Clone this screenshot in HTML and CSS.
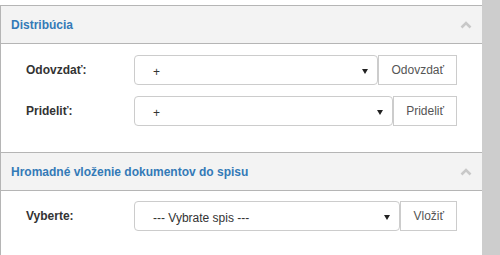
FILE: index.html
```html
<!DOCTYPE html>
<html lang="sk">
<head>
    <meta charset="UTF-8">
    <title>Distribúcia</title>
    <link rel="stylesheet" href="styles.css">
</head>
<body>
    <div class="page">
        <div class="main">
            <div class="panel">
                <div class="panel-heading">
                    <span class="panel-title">Distribúcia</span>
                    <svg class="chevron" width="12" height="8" viewBox="0 0 12 8"><path d="M1.5 6.5 L6 2 L10.5 6.5" fill="none" stroke="#c8c8c8" stroke-width="2.6"/></svg>
                </div>
                <div class="panel-body">
                    <div class="form-row">
                        <label>Odovzdať:</label>
                        <div class="input-group">
                            <div class="select"><span>+</span><span class="caret"></span></div>
                            <button class="btn">Odovzdať</button>
                        </div>
                    </div>
                    <div class="form-row">
                        <label>Prideliť:</label>
                        <div class="input-group">
                            <div class="select"><span>+</span><span class="caret"></span></div>
                            <button class="btn">Prideliť</button>
                        </div>
                    </div>
                </div>

                <div class="panel-heading">
                    <span class="panel-title">Hromadné vloženie dokumentov do spisu</span>
                    <svg class="chevron" width="12" height="8" viewBox="0 0 12 8"><path d="M1.5 6.5 L6 2 L10.5 6.5" fill="none" stroke="#c8c8c8" stroke-width="2.6"/></svg>
                </div>
                <div class="panel-body second">
                    <div class="form-row">
                        <label>Vyberte:</label>
                        <div class="input-group">
                            <div class="select"><span>--- Vybrate spis ---</span><span class="caret"></span></div>
                            <button class="btn">Vložiť</button>
                        </div>
                    </div>
                </div>
            </div>
        </div>
        <div class="scrollbar"></div>
    </div>
</body>
</html>
```

FILE: styles.css
```css
body {
    margin: 0;
    font: 12px "Liberation Sans", Arial, sans-serif;
    color: #333;
}

.page {
    display: flex;
    height: 100vh;
}
.main {
    width: 482px;
    padding-top: 5px;
    box-sizing: border-box;
}
.scrollbar {
    flex: 1;
    background: #cdcdcd;
}

.panel {
    border-left: 1px solid #b5b5b5;
    height: 100%;
}
.panel-heading {
    display: flex;
    align-items: center;
    justify-content: space-between;
    height: 37px;
    padding: 0 10px;
    background: #f3f3f3;
    border-top: 1px solid #b5b5b5;
    border-bottom: 1px solid #b5b5b5;
}
.panel-title {
    color: #337ab7;
    font-weight: bold;
}

.panel-body {
    display: flex;
    flex-direction: column;
    gap: 11px;
    padding: 11px 24px 26px 25px;
}
.panel-body.second {
    padding-top: 10px;
}

.form-row {
    display: flex;
    align-items: center;
}
.form-row label {
    width: 108px;
    font-weight: bold;
    color: #333;
}

.input-group {
    display: flex;
    width: 323px;
    height: 30px;
}
.select {
    flex: 1;
    display: flex;
    align-items: center;
    justify-content: space-between;
    padding: 3px 9px 0 18px;
    border: 1px solid #ccc;
    border-radius: 4px;
    color: #333;
}
.caret {
    width: 0;
    height: 0;
    border-top: 5px solid #222;
    border-left: 3.5px solid transparent;
    border-right: 3.5px solid transparent;
}
.btn {
    padding: 0 12px;
    border: 1px solid #ccc;
    background: #fff;
    color: #555;
    font: 12px "Liberation Sans", Arial, sans-serif;
}
```
